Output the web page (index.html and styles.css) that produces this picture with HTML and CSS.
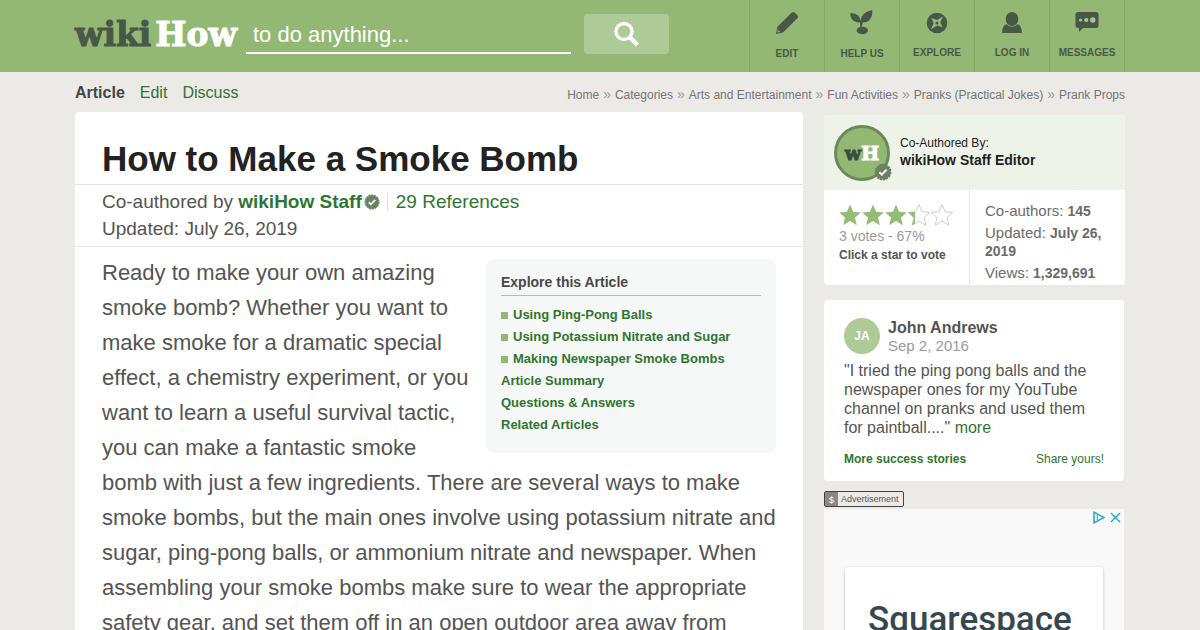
FILE: index.html
```html
<!DOCTYPE html>
<html lang="en">
<head>
<meta charset="utf-8">
<meta name="viewport" content="width=device-width, initial-scale=1">
<title>How to Make a Smoke Bomb - wikiHow</title>
<link rel="stylesheet" href="styles.css">
</head>
<body>
<svg class="defs" width="0" height="0" aria-hidden="true">
  <symbol id="badge" viewBox="0 0 18 18">
    <circle cx="9" cy="9" r="7.6" fill="#6b8260"/>
    <circle cx="9" cy="9" r="7.7" fill="none" stroke="#6b8260" stroke-width="1.6" stroke-dasharray="2.4 .8"/>
    <path d="M5.4 9.3l2.4 2.3 4.8-4.9" fill="none" stroke="#fff" stroke-width="2"/>
  </symbol>
  <symbol id="star" viewBox="0 0 22 22">
    <path d="M11 .5l3.100 7.200 7.700.7-5.800 5 1.800 7.800L11 17.100l-6.800 4.100L6 13.400.2 8.400l7.700-.7z"/>
  </symbol>
</svg>

<header class="header">
  <div class="wrap header-row">
    <a class="logo" href="#"><span class="logo-wiki">wiki</span><span class="logo-how">How</span></a>
    <form class="search" role="search">
      <input class="search-input" type="text" aria-label="Search" placeholder="to do anything...">
      <button class="search-button" type="button" aria-label="Search">
        <svg width="26" height="26" viewBox="0 0 26 26" fill="none" stroke="#fff"><circle cx="10" cy="10.500" r="8" stroke-width="3.400"/><path d="M15.500 16l8 8" stroke-width="4.200"/></svg>
      </button>
    </form>
    <nav class="nav">
      <a class="nav-item" href="#">
        <svg width="26" height="26" viewBox="0 0 26 26"><path d="M2 24l1.200-7L17.500 2.800c1.200-1.100 2.300-1 3.300-.1l2.700 2.600c.9 1 .9 2-.1 3L9 22.600z" fill="#485848"/><path d="M3.900 18.600l.5 2.200 2.300 1.100-2.500.7-.8-.8z" fill="#93b874"/></svg>
        <span>EDIT</span></a>
      <a class="nav-item" href="#">
        <svg width="26" height="26" viewBox="0 0 26 26" fill="#485848"><path d="M1.200 3.300c6-.3 10.200 2.300 10.300 8.200C12 4.700 16.400 1 23.300.2c.5 7.900-3.200 12.300-9.600 12.200l-1 4.400c3.700.1 6.300 1.500 6.300 3.700 0 2.100-2.800 3.700-5.900 3.700s-5.400-1.500-5.400-3.600c0-1.900 1.300-3.200 3.600-3.700l-.4-4.500C5 12.700 1.300 9.400 1.200 3.300z"/></svg>
        <span>HELP US</span></a>
      <a class="nav-item nav-high" href="#">
        <svg width="26" height="26" viewBox="0 0 26 26"><circle cx="13" cy="13" r="10.300" fill="#485848"/><path d="M19 6.500l-2.700 5.800 2.200 5-5.300-1.800L7 19.300l2.600-6L7.300 8l5.700 2.100z" fill="#93b874"/><circle cx="13" cy="13" r="1.500" fill="#485848"/></svg>
        <span>EXPLORE</span></a>
      <a class="nav-item nav-high" href="#">
        <svg width="26" height="26" viewBox="0 0 26 26" fill="#485848"><ellipse cx="13" cy="9" rx="6.300" ry="7"/><path d="M3 23c.1-4.500 1.100-7.500 4.200-9.100 3.500 3.400 8.100 3.400 11.600 0 3.100 1.600 4.100 4.600 4.200 9.100z"/></svg>
        <span>LOG IN</span></a>
      <a class="nav-item nav-high" href="#">
        <svg width="26" height="26" viewBox="0 0 26 26"><path d="M4 2h18q2.500 0 2.500 2.500v11q0 2.500-2.500 2.500H9l-4 4V18H4q-2.500 0-2.500-2.500v-11Q1.500 2 4 2z" fill="#485848"/><circle cx="6.500" cy="10" r="1.600" fill="#a9c792"/><circle cx="12.300" cy="10" r="2.100" fill="#a9c792"/><circle cx="18.800" cy="10" r="2.700" fill="#a9c792"/></svg>
        <span>MESSAGES</span></a>
    </nav>
  </div>
</header>

<div class="wrap subbar">
  <nav class="tabs"><a class="tab-active" href="#">Article</a><a href="#">Edit</a><a href="#">Discuss</a></nav>
  <nav class="crumbs" aria-label="Breadcrumb">
    <a href="#">Home</a><i>»</i><a href="#">Categories</a><i>»</i><a href="#">Arts and Entertainment</a><i>»</i><a href="#">Fun Activities</a><i>»</i><a href="#">Pranks (Practical Jokes)</a><i>»</i><a href="#">Prank Props</a>
  </nav>
</div>

<div class="wrap columns">
  <main class="article">
    <h1>How to Make a Smoke Bomb</h1>
    <div class="meta">
      <div class="meta-row"><span>Co-authored by <a class="strong" href="#">wikiHow Staff</a></span><svg class="meta-badge" width="16" height="16"><use href="#badge"/></svg><a class="refs" href="#">29 References</a></div>
      <div>Updated: July 26, 2019</div>
    </div>
    <div class="intro">
      <aside class="toc">
        <h2>Explore this Article</h2>
        <ul>
          <li class="method"><a href="#">Using Ping-Pong Balls</a></li>
          <li class="method"><a href="#">Using Potassium Nitrate and Sugar</a></li>
          <li class="method"><a href="#">Making Newspaper Smoke Bombs</a></li>
          <li><a href="#">Article Summary</a></li>
          <li><a href="#">Questions &amp; Answers</a></li>
          <li><a href="#">Related Articles</a></li>
        </ul>
      </aside>
      <p>Ready to make your own amazing smoke bomb? Whether you want to make smoke for a dramatic special effect, a chemistry experiment, or you want to learn a useful survival tactic, you can make a fantastic smoke bomb with just a few ingredients. There are several ways to make smoke bombs, but the main ones involve using potassium nitrate and sugar, ping-pong balls, or ammonium nitrate and newspaper. When assembling your smoke bombs make sure to wear the appropriate safety gear, and set them off in an open outdoor area away from</p>
    </div>
  </main>

  <aside class="sidebar">
    <section class="card author">
      <div class="author-head">
        <div class="author-avatar"><span class="mono-w">w</span><span class="mono-h">H</span><svg class="author-badge" width="18" height="18"><use href="#badge"/></svg></div>
        <div><div class="author-label">Co-Authored By:</div><a class="author-name" href="#">wikiHow Staff Editor</a></div>
      </div>
      <div class="author-body">
        <div class="rating">
          <div class="stars" role="img" aria-label="67%">
            <svg width="22" height="22" class="full"><use href="#star"/></svg>
            <svg width="22" height="22" class="full"><use href="#star"/></svg>
            <svg width="22" height="22" class="full"><use href="#star"/></svg>
            <svg width="22" height="22" viewBox="0 0 22 22"><clipPath id="part"><rect width="7" height="22"/></clipPath><use href="#star" class="empty"/><use href="#star" class="full" clip-path="url(#part)"/></svg>
            <svg width="22" height="22" class="empty"><use href="#star"/></svg>
          </div>
          <div class="votes">3 votes - 67%</div>
          <div class="vote-hint">Click a star to vote</div>
        </div>
        <div class="stats">
          <div>Co-authors: <b>145</b></div>
          <div>Updated: <b>July 26, 2019</b></div>
          <div>Views: <b>1,329,691</b></div>
        </div>
      </div>
    </section>

    <section class="card story">
      <div class="story-head">
        <div class="story-avatar">JA</div>
        <div><div class="story-name">John Andrews</div><div class="story-date">Sep 2, 2016</div></div>
      </div>
      <p>"I tried the ping pong balls and the newspaper ones for my YouTube channel on pranks and used them for paintball...." <a href="#">more</a></p>
      <div class="story-links"><a class="strong" href="#">More success stories</a><a href="#">Share yours!</a></div>
    </section>

    <div class="ad-label"><span class="ad-dollar">$</span><span class="ad-text">Advertisement</span></div>
    <section class="ad">
      <div class="ad-controls">
        <svg width="12" height="13" viewBox="0 0 12 13" fill="none" stroke="#24a5c8" stroke-width="1.500"><path d="M1 1.200v10.600l10-5.300z"/><path d="M4.300 4v5" stroke-width="1"/></svg>
        <svg width="11" height="11" viewBox="0 0 11 11" stroke="#24a5c8" stroke-width="1.400"><path d="M1 1l9 9M10 1l-9 9"/></svg>
      </div>
      <div class="ad-card">Squarespace</div>
    </section>
  </aside>
</div>
</body>
</html>
```

FILE: styles.css
```css
* { box-sizing: border-box; }
body {
  margin: 0;
  height: 100vh;
  overflow: hidden auto;
  scrollbar-width: none;
  background: #ebeae6;
  color: #545454;
  font-family: "Liberation Sans", Arial, sans-serif;
}
a { color: #307530; text-decoration: none; }
.strong { font-weight: bold; }
.defs { position: absolute; }
.wrap { max-width: 1050px; margin: 0 auto; }

.header { background: #93b874; }
.header-row { display: flex; align-items: flex-start; }
.logo {
  flex: none;
  width: 171px;
  padding-top: 15px;
  display: flex;
  gap: 4px;
  font: bold 33px/40px "DejaVu Serif", serif;
  -webkit-text-stroke: 1px currentColor;
}
.logo-wiki { color: #485848; }
.logo-how { color: #fff; }
.search { flex: 1; display: flex; gap: 13px; padding: 14px 80px 0 0; }
.search-input {
  flex: 1;
  min-width: 0;
  height: 40px;
  padding: 4px 7px 0;
  border: 0;
  border-bottom: 2px solid #fff;
  background: transparent;
  color: #fff;
  font: 22px "Liberation Sans", Arial, sans-serif;
}
.search-input::placeholder { color: #fff; opacity: 1; }
.search-button {
  width: 85px;
  height: 40px;
  padding: 0;
  border: 0;
  border-radius: 4px;
  background: #aeca97;
  display: flex;
  align-items: center;
  justify-content: center;
}
.nav { flex: none; display: flex; border-right: 1px solid #86aa68; }
.nav-item {
  width: 75px;
  height: 72px;
  padding-top: 10px;
  border-left: 1px solid #86aa68;
  display: flex;
  flex-direction: column;
  align-items: center;
  gap: 12px;
  color: #485848;
  font-size: 10px;
  font-weight: bold;
  line-height: 12px;
}
.nav-high { gap: 11px; }

.subbar {
  height: 40px;
  display: flex;
  justify-content: space-between;
  font-size: 16px;
  line-height: 20px;
  padding-top: 11px;
}
.tabs { display: flex; gap: 15px; }
.tab-active { color: #454545; font-weight: bold; }
.crumbs { display: flex; gap: 4px; padding-top: 2px; font-size: 12px; color: #999; white-space: nowrap; }
.crumbs a { color: #757575; }
.crumbs i { font-style: normal; font-size: 14px; line-height: 18px; }

.columns { display: flex; align-items: flex-start; gap: 21px; }
.article { flex: 1; min-width: 0; background: #fff; border-radius: 4px; }
h1 {
  margin: 0;
  padding: 27px 27px 5px;
  border-bottom: 1px solid #e5e5e5;
  color: #222;
  font-size: 35px;
  line-height: 40px;
}
.meta { padding: 3px 27px 4px; border-bottom: 1px solid #e5e5e5; font-size: 19px; line-height: 27px; }
.meta-row { display: flex; align-items: center; }
.meta-badge { margin: 0 7px 0 2px; }
.refs { border-left: 1px solid #ddd; padding-left: 8px; line-height: 18px; }
.intro { padding: 8px 27px; font-size: 22px; line-height: 35px; }
.intro p { margin: 0; }
.toc {
  float: right;
  width: 290px;
  margin: 4px 0 10px 15px;
  padding: 13px 15px 17px;
  border-radius: 8px;
  background: #f5f8f7;
  font-size: 13px;
  line-height: 22px;
}
.toc h2 { margin: 0 0 8px; padding-bottom: 3px; border-bottom: 1px solid #bbb; color: #484848; font-size: 14px; line-height: 20px; }
.toc ul { list-style: none; margin: 0; padding: 0; font-weight: bold; }
.method { display: flex; align-items: center; gap: 5px; }
.method::before { content: ""; width: 7px; height: 7px; background: #93b874; }

.sidebar { width: 301px; padding-top: 3px; }
.card { background: #fff; border-radius: 4px; margin-bottom: 15px; overflow: hidden; }
.author-head { display: flex; gap: 10px; padding: 10px 10px 9px; background: #eef3e9; }
.author-avatar {
  position: relative;
  width: 56px;
  height: 56px;
  border: 3px solid #6b8a5a;
  border-radius: 50%;
  background: #93b874;
  display: flex;
  align-items: center;
  justify-content: center;
  font: bold 19px/24px "DejaVu Serif", serif;
  -webkit-text-stroke: 1px currentColor;
}
.mono-w { color: #3a4d3a; }
.mono-h { color: #fff; }
.author-badge { position: absolute; right: -5px; bottom: -3px; }
.author-label { padding-top: 9px; color: #222; font-size: 12px; line-height: 18px; }
.author-name { display: block; color: #222; font-size: 14px; font-weight: bold; line-height: 16px; }
.author-body { display: flex; }
.rating { width: 146px; padding: 14px 0 21px 15px; border-right: 1px solid #e5e5e5; }
.stars { display: flex; gap: 1px; }
.full { fill: #93bd74; }
.empty { fill: #fff; stroke: #ccc; }
.votes { color: #999; font-size: 14px; line-height: 20px; }
.vote-hint { font-size: 12px; font-weight: bold; line-height: 18px; color: #545454; }
.stats { flex: 1; padding: 12px 15px 0; display: flex; flex-direction: column; gap: 4px; color: #6b6b6b; font-size: 15px; line-height: 18px; }
.stats b { font-size: 14px; }

.story { padding: 18px 20px 13px; margin: 0 1px 10px 0; }
.story-head { display: flex; gap: 8px; }
.story-avatar {
  width: 36px;
  height: 36px;
  border-radius: 50%;
  background: #aeca97;
  color: #fff;
  font-size: 12px;
  font-weight: bold;
  line-height: 36px;
  text-align: center;
}
.story-name { padding-top: 1px; font-weight: bold; font-size: 16px; line-height: 18px; }
.story-date { color: #999; font-size: 15px; line-height: 18px; }
.story p { margin: 6px 0 13px; font-size: 16px; line-height: 19px; }
.story-links { display: flex; justify-content: space-between; font-size: 12px; line-height: 18px; }

.ad-label {
  width: fit-content;
  display: flex;
  margin-bottom: 2px;
  border: 1px solid #444;
  border-radius: 2px;
  font-size: 9px;
  line-height: 14px;
}
.ad-dollar { width: 13px; background: #888; color: #fff; text-align: center; line-height: 16px; height: 14px; }
.ad-text { padding: 0 4px 0 3px; }
.ad { margin-right: 1px; padding: 2px 3px 0 21px; background: #f8f8f8; }
.ad-controls { display: flex; justify-content: flex-end; align-items: center; gap: 5px; }
.ad-card {
  margin: 43px 18px 0 0;
  padding: 32px 23px;
  background: #fff;
  border-radius: 4px;
  box-shadow: 0 1px 3px rgba(0, 0, 0, .25);
  color: #37474f;
  font: 500 35px/42px Roboto, sans-serif;
}
```
